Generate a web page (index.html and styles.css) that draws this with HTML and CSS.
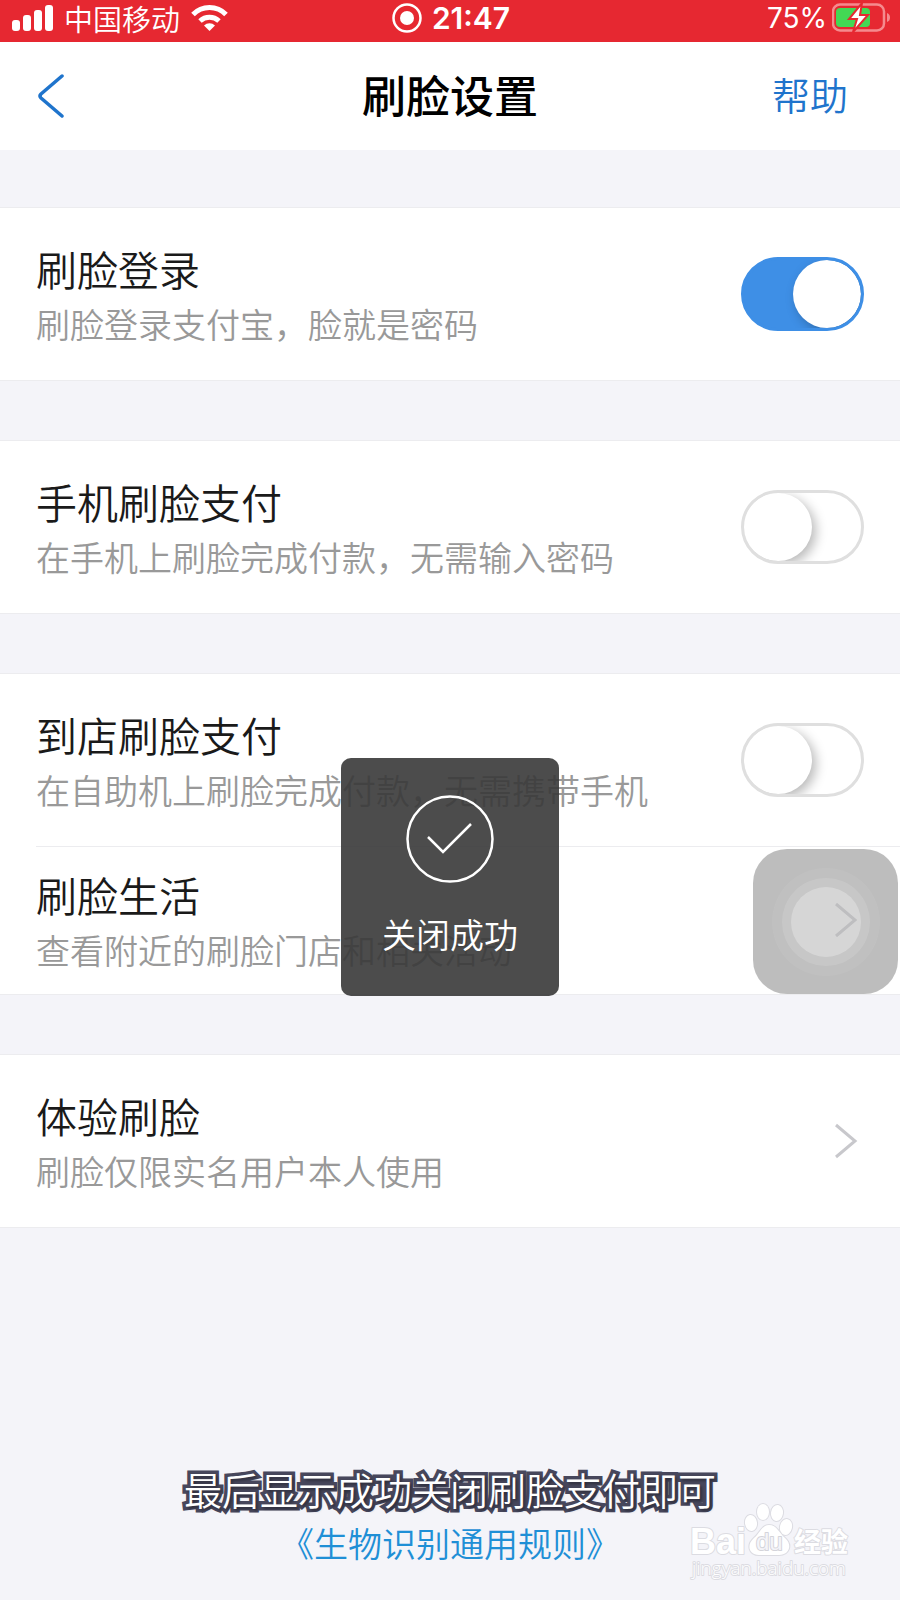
FILE: index.html
```html
<!DOCTYPE html>
<html lang="zh-CN">
<head>
    <meta charset="UTF-8">
    <meta name="viewport" content="width=device-width, initial-scale=1.0">
    <title>刷脸设置</title>
    <link rel="stylesheet" href="styles.css">
</head>
<body>

    <div class="status-bar">
        <div class="status-left">
            <svg class="signal" width="42" height="28" viewBox="0 0 42 28" fill="#fff">
                <rect x="0" y="16" width="8" height="11" rx="3"/>
                <rect x="11" y="11" width="8" height="16" rx="3"/>
                <rect x="22" y="6" width="8" height="21" rx="3"/>
                <rect x="33" y="1" width="8" height="26" rx="3"/>
            </svg>
            <span class="carrier">中国移动</span>
            <svg class="wifi" width="38" height="28" viewBox="0 0 38 28">
                <g fill="none" stroke="#fff" stroke-width="5">
                    <path d="M3 10.500 A23 23 0 0 1 36 10.500"/>
                    <path d="M10 17 A14 14 0 0 1 29 17"/>
                </g>
                <path d="M19.500 27 L14 21.500 A8 8 0 0 1 25 21.500 Z" fill="#fff"/>
            </svg>
        </div>
        <div class="status-center">
            <svg width="30" height="30" viewBox="0 0 30 30">
                <circle cx="15" cy="15" r="13.500" fill="none" stroke="#fff" stroke-width="2.500"/>
                <circle cx="15" cy="15" r="7" fill="#fff"/>
            </svg>
            <span class="time">21:47</span>
        </div>
        <div class="status-right">
            <span class="percent">75%</span>
            <svg width="58" height="30" viewBox="0 0 58 30">
                <rect x="1" y="1.500" width="51" height="26" rx="7" fill="none" stroke="#f58a8e" stroke-width="2.500"/>
                <path d="M55 10 Q58 11 58 14.500 Q58 18 55 19 Z" fill="#f58a8e"/>
                <rect x="4" y="5" width="34" height="19" rx="4" fill="#43d854"/>
                <path d="M30 0 L17 16 H25 L21 29 L36 12 H28 Z" fill="#fff" stroke="#e62831" stroke-width="2"/>
            </svg>
        </div>
    </div>

    <header class="nav-bar">
        <button class="back" type="button" aria-label="返回">
            <svg width="28" height="46" viewBox="0 0 28 46">
                <path d="M24 3 L3 21 Q1 23 3 25 L24 43" fill="none" stroke="#1f74cc" stroke-width="3.500" stroke-linecap="round"/>
            </svg>
        </button>
        <h1>刷脸设置</h1>
        <a class="help" href="#">帮助</a>
    </header>

    <main class="settings">
        <section class="card">
            <label class="row">
                <span class="row-text">
                    <span class="row-title">刷脸登录</span>
                    <span class="row-desc">刷脸登录支付宝，脸就是密码</span>
                </span>
                <input class="switch" type="checkbox" checked>
            </label>
        </section>

        <section class="card">
            <label class="row">
                <span class="row-text">
                    <span class="row-title">手机刷脸支付</span>
                    <span class="row-desc">在手机上刷脸完成付款，无需输入密码</span>
                </span>
                <input class="switch" type="checkbox">
            </label>
        </section>

        <section class="card">
            <label class="row">
                <span class="row-text">
                    <span class="row-title">到店刷脸支付</span>
                    <span class="row-desc">在自助机上刷脸完成付款，无需携带手机</span>
                </span>
                <input class="switch" type="checkbox">
            </label>
            <a class="row row-compact" href="#">
                <span class="row-text">
                    <span class="row-title">刷脸生活</span>
                    <span class="row-desc">查看附近的刷脸门店和相关活动</span>
                </span>
                <svg class="chevron" width="24" height="36" viewBox="0 0 24 36">
                    <path d="M2 2 L21 18 L2 34" fill="none" stroke="#c8c8cc" stroke-width="3"/>
                </svg>
            </a>
        </section>

        <section class="card">
            <a class="row" href="#">
                <span class="row-text">
                    <span class="row-title">体验刷脸</span>
                    <span class="row-desc">刷脸仅限实名用户本人使用</span>
                </span>
                <svg class="chevron" width="24" height="36" viewBox="0 0 24 36">
                    <path d="M2 2 L21 18 L2 34" fill="none" stroke="#c8c8cc" stroke-width="3"/>
                </svg>
            </a>
        </section>
    </main>

    <footer class="footer">
        <a href="#">《生物识别通用规则》</a>
    </footer>

    <!-- floating layers -->
    <button class="assistive" type="button" aria-label="辅助触控">
        <span class="ring">
            <span class="ring-middle">
                <span class="ring-inner"></span>
            </span>
        </span>
    </button>

    <div class="toast" role="status">
        <svg width="88" height="88" viewBox="0 0 88 88" fill="none" stroke="#fff" stroke-width="2.500">
            <circle cx="44" cy="44" r="42.500"/>
            <path d="M22 42 L37 57 L65 29"/>
        </svg>
        <span>关闭成功</span>
    </div>

    <p class="caption">最后显示成功关闭刷脸支付即可</p>

    <div class="watermark">
        <svg width="170" height="86" viewBox="0 0 170 86">
            <g class="mark">
                <ellipse cx="64" cy="21" rx="6" ry="8" transform="rotate(-8 64 21)"/>
                <ellipse cx="76" cy="10" rx="6" ry="8"/>
                <ellipse cx="90" cy="11" rx="6" ry="8" transform="rotate(8 90 11)"/>
                <ellipse cx="99" cy="25" rx="6" ry="8" transform="rotate(12 99 25)"/>
                <path d="M82 23 C75 23 73 31 67 36 C59 43 62 53 72 53 C78 53 86 53 92 53 C102 53 106 43 98 36 C92 31 90 23 82 23 Z"/>
                <text class="mark-name" x="3" y="52">Bai</text>
                <text class="mark-du" x="69" y="48">du</text>
                <text class="mark-cn" x="107" y="50">经验</text>
                <text class="mark-url" x="5" y="73">jingyan.baidu.com</text>
            </g>
        </svg>
    </div>

</body>
</html>
```
FILE: styles.css
```css
* {
    box-sizing: border-box;
}

body {
    font-family: "Noto Sans CJK SC", sans-serif;
    font-weight: 350;
    display: flex;
    flex-direction: column;
    min-height: 100vh;
    margin: 0;
    background-color: #f4f4f9;
    position: relative;
    overflow-x: hidden;
}

a {
    color: inherit;
    text-decoration: none;
}

button {
    border: none;
    padding: 0;
    background: none;
    cursor: pointer;
}

svg {
    display: block;
    flex: none;
}

/* Status bar */
.status-bar {
    display: grid;
    grid-template-columns: 1fr auto 1fr;
    align-items: center;
    height: 42px;
    padding: 0 10px 6px 12px;
    background-color: #e62831;
    color: #fff;
}

.status-left,
.status-center,
.status-right {
    display: flex;
    align-items: center;
}

.status-left {
    gap: 10px;
}

.status-center {
    gap: 10px;
}

.status-right {
    justify-content: flex-end;
    gap: 5px;
}

.carrier {
    font-size: 29px;
    line-height: 36px;
}

.time,
.percent {
    font-family: Inter, sans-serif;
    font-size: 28px;
    line-height: 36px;
    font-weight: 400;
}

.time {
    font-size: 30px;
    font-weight: 600;
}

/* Navigation */
.nav-bar {
    display: grid;
    grid-template-columns: 1fr auto 1fr;
    align-items: center;
    height: 108px;
    padding: 0 38px;
    background-color: #fff;
}

.back {
    justify-self: start;
}

h1 {
    margin: 0;
    padding-bottom: 4px;
    font-size: 44px;
    line-height: 64px;
    font-weight: 500;
    color: #000;
}

.help {
    justify-self: end;
    padding: 0 14px 4px;
    font-size: 38px;
    line-height: 56px;
    color: #1f74cc;
}

/* Settings list */
.settings {
    display: flex;
    flex-direction: column;
    gap: 59px;
    padding-top: 57px;
}

.card {
    border-top: 1px solid #ececef;
    border-bottom: 1px solid #ececef;
    background-color: #fff;
}

.row {
    display: flex;
    align-items: center;
    justify-content: space-between;
    height: 172px;
    padding: 0 36px;
}

.row-compact {
    position: relative;
    height: 148px;
}

.row-compact::before {
    content: "";
    position: absolute;
    top: 0;
    left: 36px;
    right: 0;
    height: 1px;
    background-color: #ececef;
}

.row-text {
    display: flex;
    flex-direction: column;
    padding-top: 4px;
}

.row-title {
    font-size: 41px;
    line-height: 56px;
    color: #1a1a1a;
}

.row-desc {
    font-size: 34px;
    line-height: 56px;
    color: #999;
}

.chevron {
    margin-right: 6px;
}

.switch {
    appearance: none;
    -webkit-appearance: none;
    flex: none;
    width: 123px;
    height: 74px;
    margin: 0;
    border: 3px solid #dfdfdf;
    border-radius: 37px;
    background-color: #fff;
    overflow: hidden;
    cursor: pointer;
}

.switch::before {
    content: "";
    display: block;
    width: 68px;
    height: 68px;
    border-radius: 50%;
    background-color: #fff;
    box-shadow: 4px 4px 12px rgba(0, 0, 0, 0.28);
}

.switch:checked {
    border-color: #3e8fe6;
    background-color: #3e8fe6;
}

.switch:checked::before {
    margin-left: auto;
}

/* Footer */
.footer {
    margin-top: auto;
    padding-bottom: 32px;
    text-align: center;
    font-size: 34px;
    line-height: 50px;
    color: #1f8fd6;
}

/* Floating layers */
.assistive {
    position: absolute;
    top: 849px;
    right: 2px;
    display: flex;
    align-items: center;
    justify-content: center;
    width: 145px;
    height: 145px;
    border-radius: 34px;
    background-color: rgba(0, 0, 0, 0.26);
}

.ring,
.ring-middle,
.ring-inner {
    display: flex;
    align-items: center;
    justify-content: center;
    border-radius: 50%;
}

.ring {
    width: 108px;
    height: 108px;
    background-color: rgba(255, 255, 255, 0.06);
}

.ring-middle {
    width: 88px;
    height: 88px;
    background-color: rgba(255, 255, 255, 0.12);
}

.ring-inner {
    width: 70px;
    height: 70px;
    background-color: rgba(255, 255, 255, 0.28);
}

.toast {
    position: absolute;
    top: 758px;
    left: 50%;
    transform: translateX(-50%);
    display: flex;
    flex-direction: column;
    align-items: center;
    gap: 26px;
    width: 218px;
    height: 238px;
    padding-top: 37px;
    border-radius: 10px;
    background-color: rgba(56, 56, 56, 0.9);
    color: #fff;
    font-size: 34px;
    line-height: 50px;
}

.caption {
    position: absolute;
    left: 0;
    right: 0;
    bottom: 83px;
    margin: 0;
    text-align: center;
    font-size: 38px;
    line-height: 56px;
    color: #fff;
    -webkit-text-stroke: 7px #47475c;
    stroke-linejoin: round;
    paint-order: stroke fill;
    text-shadow: 2px 2px 3px rgba(0, 0, 0, 0.4);
}

.watermark {
    position: absolute;
    right: 43px;
    bottom: 12px;
}

.mark {
    fill: #fff;
    stroke: #dcdce2;
    stroke-width: 2px;
    stroke-linejoin: round;
    paint-order: stroke fill;
}

.mark-name {
    font-family: "Liberation Sans", sans-serif;
    font-size: 36px;
    font-weight: bold;
}

.mark-du {
    font-family: "Liberation Sans", sans-serif;
    font-size: 24px;
    fill: #f4f4f9;
    stroke: #d4d4da;
}

.mark-cn {
    font-size: 27px;
    font-weight: bold;
}

.mark-url {
    font-family: "Open Sans", sans-serif;
    font-size: 19px;
}
```
